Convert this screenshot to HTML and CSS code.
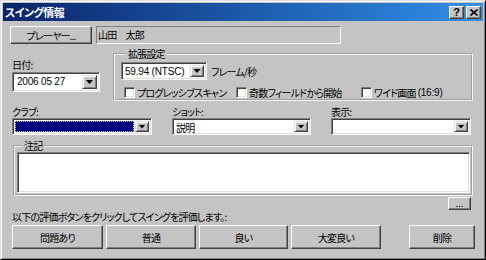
FILE: index.html
```html
<!DOCTYPE html>
<html lang="ja">
<head>
  <meta charset="UTF-8">
  <title>スイング情報</title>
  <link rel="stylesheet" href="styles.css">
</head>
<body>
  <div class="window">
    <div class="titlebar">
      <span class="title">スイング情報</span>
      <div class="caption-btns">
        <span class="cap-btn">?</span>
        <span class="cap-btn">
          <svg width="8" height="7" viewBox="0 0 8 7"><path d="M0.5 0.5 L7.5 6.5 M7.5 0.5 L0.5 6.5" stroke="#000" stroke-width="1.6"/></svg>
        </span>
      </div>
    </div>

    <div class="content">
      <div class="row-player">
        <button class="btn btn-player">プレーヤー...</button>
        <div class="name-field">山田　太郎</div>
      </div>

      <div class="row-settings">
        <div class="date-col">
          <label class="lbl">日付:</label>
          <div class="combo combo-date">
            <span class="combo-text num">2006 05 27</span>
            <span class="drop"></span>
          </div>
        </div>
        <fieldset class="group group-ext">
          <legend>拡張設定</legend>
          <div class="fps-row">
            <div class="combo combo-fps">
              <span class="combo-text num">59.94 (NTSC)</span>
              <span class="drop"></span>
            </div>
            <span class="fps-unit">フレーム/秒</span>
          </div>
          <div class="check-row">
            <label class="check check-1"><span class="box"></span>プログレッシブスキャン</label>
            <label class="check check-2"><span class="box"></span>奇数フィールドから開始</label>
            <label class="check"><span class="box"></span>ワイド画面<span class="num">(16:9)</span></label>
          </div>
        </fieldset>
      </div>

      <div class="row-combos">
        <div class="field field-club">
          <label class="lbl">クラブ:</label>
          <div class="combo combo-small">
            <span class="combo-text selected"></span>
            <span class="drop"></span>
          </div>
        </div>
        <div class="field field-shot">
          <label class="lbl">ショット:</label>
          <div class="combo combo-small">
            <span class="combo-text">説明</span>
            <span class="drop"></span>
          </div>
        </div>
        <div class="field field-view">
          <label class="lbl">表示:</label>
          <div class="combo combo-small">
            <span class="combo-text"></span>
            <span class="drop"></span>
          </div>
        </div>
      </div>

      <fieldset class="group group-note">
        <legend>注記</legend>
        <div class="note-box"></div>
      </fieldset>

      <div class="more-row">
        <button class="btn btn-more">...</button>
      </div>

      <div class="prompt">以下の評価ボタンをクリックしてスイングを評価します。:</div>

      <div class="rate-row">
        <button class="btn btn-rate w-91">問題あり</button>
        <button class="btn btn-rate w-90">普通</button>
        <button class="btn btn-rate w-89">良い</button>
        <button class="btn btn-rate w-90">大変良い</button>
        <button class="btn btn-rate btn-delete">削除</button>
      </div>
    </div>
  </div>
</body>
</html>
```

FILE: styles.css
```css
*{
  box-sizing: border-box;
}
body{
  margin: 0;
  background: #c4c4c4;
  font-family: "Noto Sans CJK JP", "Liberation Sans", sans-serif;
  font-size: 10px;
  letter-spacing: -0.8px;
  font-feature-settings: "palt";
  color: #000;
}
.num{
  font-family: "Liberation Sans", "Noto Sans CJK JP", sans-serif;
  letter-spacing: -0.2px;
}
.window{
  width: 486px;
  height: 260px;
  background: #c4c4c4;
  border: 1px solid;
  border-color: #dfdfdf #000 #000 #dfdfdf;
  box-shadow: inset 1px 1px #fff, inset -1px -1px #808080;
  padding: 2px;
  overflow: hidden;
}

/* タイトルバー */
.titlebar{
  height: 18px;
  display: flex;
  align-items: center;
  justify-content: space-between;
  padding: 0 2px 0 2px;
  background: linear-gradient(to right, #0a246a, #2a7fd6 85%, #3a90e0);
}
.title{
  color: #fff;
  font-weight: bold;
  font-size: 11px;
  letter-spacing: -0.6px;
  line-height: 18px;
}
.caption-btns{
  display: flex;
  gap: 2px;
}
.cap-btn{
  width: 15px;
  height: 13px;
  display: flex;
  align-items: center;
  justify-content: center;
  background: #c4c4c4;
  border: 1px solid;
  border-color: #fff #404040 #404040 #fff;
  box-shadow: inset -1px -1px #808080;
  font-family: "Liberation Sans", sans-serif;
  font-weight: bold;
  font-size: 11px;
  letter-spacing: 0;
  line-height: 1;
}

.content{
  padding: 5px 10px 0 7px;
}

/* 共通部品 */
.btn{
  font: inherit;
  letter-spacing: inherit;
  color: #000;
  background: #c4c4c4;
  border: 1px solid;
  border-color: #fff #404040 #404040 #fff;
  box-shadow: inset -1px -1px #808080;
  padding: 0;
  cursor: pointer;
}
.lbl{
  display: block;
  height: 13px;
  line-height: 13px;
}
.combo{
  display: flex;
  align-items: stretch;
  background: #fff;
  border: 1px solid;
  border-color: #808080 #fff #fff #808080;
  box-shadow: inset 1px 1px #404040, inset -1px -1px #dfdfdf;
  padding: 2px;
}
.combo-text{
  flex: 1;
  min-width: 0;
  padding-left: 1px;
  line-height: 14px;
  white-space: nowrap;
}
.combo-text.selected{
  background: #000080;
  outline: 1px dotted #c8c890;
  outline-offset: -1px;
}
.drop{
  width: 14px;
  flex: none;
  margin-left: 1px;
  display: flex;
  align-items: center;
  justify-content: center;
  background: #c4c4c4;
  border: 1px solid;
  border-color: #dfdfdf #404040 #404040 #dfdfdf;
  box-shadow: inset 1px 1px #fff, inset -1px -1px #808080;
}
.drop::after{
  content: "";
  width: 7px;
  height: 4px;
  background: #000;
  clip-path: polygon(0 0, 100% 0, 50% 100%);
}
.group{
  margin: 0;
  padding: 0;
  border: 2px groove #f4f4f4;
  min-width: 0;
}
.group legend{
  margin-left: 5px;
  padding: 0 2px;
  line-height: 13px;
}

/* 1行目 */
.row-player{
  display: flex;
  gap: 4px;
  height: 18px;
}
.btn-player{
  width: 82px;
}
.name-field{
  width: 245px;
  border: 1px solid;
  border-color: #808080 #fff #fff #808080;
  padding-left: 1px;
  line-height: 16px;
}

/* 日付と拡張設定 */
.row-settings{
  display: flex;
  margin-top: 3px;
}
.date-col{
  width: 90px;
  padding-left: 2px;
  padding-top: 11px;
}
.combo-date{
  margin-top: 1px;
  height: 20px;
}
.combo-date .combo-text{
  padding-left: 2px;
}
.combo-date .drop{
  width: 15px;
}
.group-ext{
  margin-left: 13px;
  width: 360px;
  padding: 2px 6px 0 6px;
}
.fps-row{
  display: flex;
  align-items: center;
  height: 18px;
}
.combo-fps{
  width: 86px;
  height: 18px;
}
.fps-unit{
  margin-left: 4px;
}
.check-row{
  display: flex;
  align-items: center;
  height: 14px;
  margin-top: 5px;
  padding-left: 3px;
}
.check{
  display: flex;
  align-items: center;
  gap: 2px;
  white-space: nowrap;
}
.check-1{
  width: 112px;
}
.check-2{
  width: 125px;
}
.box{
  width: 11px;
  height: 11px;
  background: #fff;
  border: 1px solid;
  border-color: #808080 #fff #fff #808080;
  box-shadow: inset 1px 1px #404040, inset -1px -1px #dfdfdf;
}

/* クラブ・ショット・表示 */
.row-combos{
  display: flex;
  gap: 20px;
  margin-top: 4px;
  padding-left: 2px;
}
.field-club{
  width: 140px;
}
.field-shot{
  width: 139px;
}
.field-view{
  width: 140px;
}
.combo-small{
  height: 17px;
}
.combo-small .combo-text{
  line-height: 13px;
}

/* 注記 */
.group-note{
  margin: 4px 0 0 3px;
  width: 460px;
  padding: 0 1px 1px 2px;
}
.note-box{
  height: 41px;
  background: #fff;
  border: 1px solid;
  border-color: #808080 #fff #fff #808080;
  box-shadow: inset 1px 1px #404040, inset -1px -1px #dfdfdf;
}
.more-row{
  display: flex;
  justify-content: flex-end;
  margin-top: 1px;
  padding-right: 2px;
}
.btn-more{
  width: 23px;
  height: 13px;
  font-size: 9px;
  letter-spacing: 0;
  line-height: 8px;
}

.prompt{
  padding-left: 2px;
  line-height: 13px;
  white-space: nowrap;
}

/* 評価ボタン */
.rate-row{
  display: flex;
  gap: 3px;
  margin-top: 2px;
  padding-left: 2px;
}
.btn-rate{
  height: 24px;
}
.w-91{ width: 91px; }
.w-90{ width: 90px; }
.w-89{ width: 89px; }
.btn-delete{
  width: 66px;
  margin-left: auto;
  margin-right: -2px;
}
```
